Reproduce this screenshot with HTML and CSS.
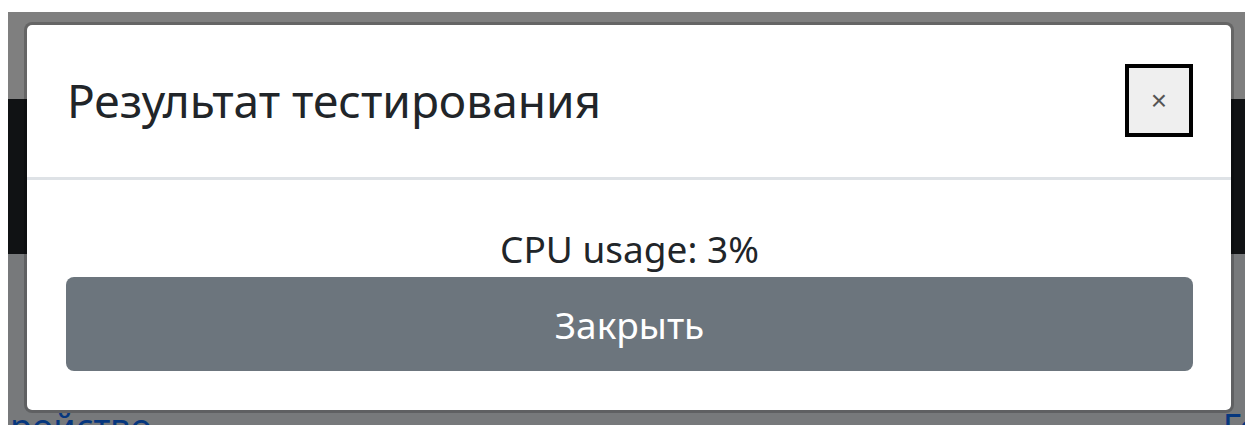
FILE: index.html
```html
<!DOCTYPE html>
<html lang="ru">
<head>
<meta charset="utf-8">
<title>Результат тестирования</title>
<link rel="stylesheet" href="styles.css">
</head>
<body>
<div class="viewport">
  <div class="page">
    <div class="page-top"></div>
    <div class="navbar"></div>
    <div class="page-main">
      <a class="link link-left" href="#">ройство</a>
      <a class="link link-right" href="#">Го</a>
    </div>
  </div>
  <div class="backdrop"></div>
  <div class="modal" role="dialog">
    <div class="modal-header">
      <h5 class="modal-title">Результат тестирования</h5>
      <button class="btn-close" type="button">×</button>
    </div>
    <div class="modal-body">
      <p class="result">CPU usage: 3%</p>
      <button class="btn-secondary" type="button">Закрыть</button>
    </div>
  </div>
</div>
</body>
</html>
```
FILE: styles.css
```css
html, body {
  margin: 0;
  padding: 0;
  background: #fff;
}

body {
  font-family: "Noto Sans", "Open Sans", "Liberation Sans", sans-serif;
  color: #212529;
}

.viewport {
  position: relative;
  margin: 12px 0 0 8px;
  height: 413px;
  overflow: hidden;
}

/* page underneath the dialog */
.page {
  display: flex;
  flex-direction: column;
  height: 100%;
}

.page-top {
  height: 87px;
  background: #fff;
}

.navbar {
  height: 155px;
  background: #212529;
}

.page-main {
  flex: 1;
  background: #eef2f7;
  display: flex;
  align-items: flex-end;
  justify-content: space-between;
  overflow: hidden;
}

.link {
  color: #0d6efd;
  font-size: 36px;
  line-height: 36px;
  margin-bottom: -20px;
  text-decoration: none;
}

.link-left {
  margin-left: 2px;
}

.link-right {
  margin-right: -16px;
}

.backdrop {
  position: absolute;
  inset: 0;
  background: rgba(0, 0, 0, 0.5);
}

/* dialog */
.modal {
  position: absolute;
  left: 16px;
  top: 10px;
  width: 1204px;
  background: #fff;
  border: 3px solid rgba(0, 0, 0, 0.2);
  border-radius: 8px;
  background-clip: padding-box;
}

.modal-header {
  display: flex;
  align-items: center;
  justify-content: space-between;
  padding: 39px 38px 40px 40px;
  border-bottom: 3px solid #dee2e6;
}

.modal-title {
  margin: 0;
  font-size: 46px;
  font-weight: 400;
  line-height: 73px;
  color: #212529;
}

.btn-close {
  width: 68px;
  height: 73px;
  box-sizing: border-box;
  border: 4px solid #000;
  background: #efefef;
  color: #555;
  font-family: "Liberation Sans", sans-serif;
  font-size: 28px;
  line-height: 1;
  padding: 0;
}

.modal-body {
  display: flex;
  flex-direction: column;
  padding: 40px 38px 39px 39px;
}

.result {
  margin: 0;
  text-align: center;
  font-size: 37px;
  line-height: 57px;
}

.btn-secondary {
  height: 94px;
  border: none;
  border-radius: 8px;
  background: #6c757d;
  color: #fff;
  font-family: inherit;
  font-size: 37px;
}
```
